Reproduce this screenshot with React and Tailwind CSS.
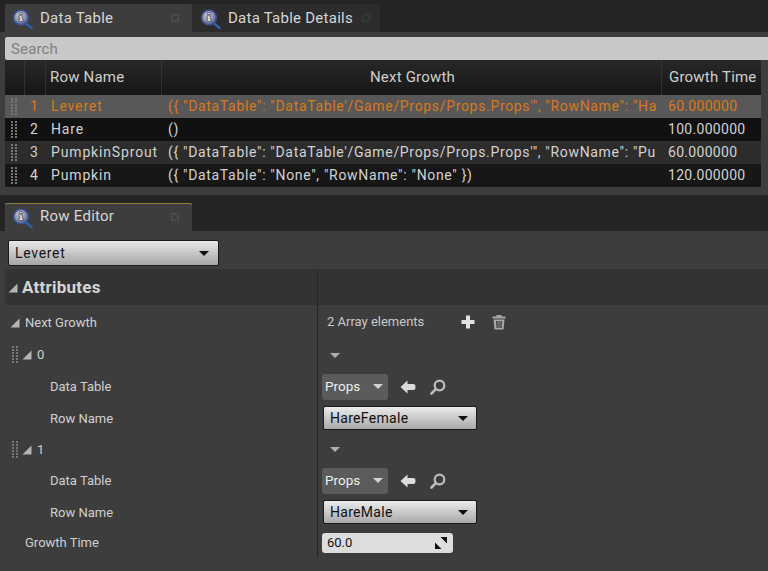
const font = { fontFamily: "Roboto, sans-serif" };

const InfoIcon = () => (
  <svg width="22" height="22" viewBox="0 0 22 22" className="mt-[3px] shrink-0">
    <defs>
      <radialGradient id="lens" cx="0.4" cy="0.35" r="0.7">
        <stop offset="0" stopColor="#c2c5d2" />
        <stop offset="0.6" stopColor="#8b90aa" />
        <stop offset="1" stopColor="#45558f" />
      </radialGradient>
    </defs>
    <path d="M13.5 14 L19.5 19" stroke="#2f5fa8" strokeWidth="2.5" strokeLinecap="round" />
    <circle cx="9" cy="8.5" r="7.3" fill="url(#lens)" stroke="#3c5398" strokeWidth="1.6" />
    <path
      d="M7.6 3.6h2.6v2H7.6z M6.8 6.8h3.4v3.8h1.1v1.7H6.8v-1.7h1v-2.1h-1z"
      fill="#f0f0f0"
      stroke="#2a2c38"
      strokeWidth="0.6"
    />
  </svg>
);

const CloseDot = ({ light }) => (
  <svg width="10" height="10" viewBox="0 0 10 10" className="shrink-0">
    <rect x="1" y="1" width="8" height="8" rx="1" fill={light ? "#4a4a4a" : "#363636"} />
    <path d="M3 3l4 4M7 3l-4 4" stroke={light ? "#353535" : "#2a2a2a"} strokeWidth="1.2" />
  </svg>
);

const Grip = ({ className = "" }) => (
  <svg width="6" height="18" viewBox="0 0 6 18" className={className}>
    {[0, 3, 6, 9, 12, 15].map((y) => (
      <g key={y} fill="#77777a">
        <rect x="0" y={y} width="2" height="2" />
        <rect x="4" y={y} width="2" height="2" />
      </g>
    ))}
  </svg>
);

const Corner = () => (
  <svg width="10" height="10" viewBox="0 0 10 10" className="shrink-0">
    <path d="M9.5 0.5V9.5H0.5Z" fill="#b4b4b4" />
  </svg>
);

const Caret = ({ color = "#111", w = 10, h = 5 }) => (
  <svg width={w} height={h} viewBox="0 0 10 5" className="shrink-0">
    <path d="M0 0H10L5 5Z" fill={color} />
  </svg>
);

const rows = [
  ["1", "Leveret", `({ "DataTable": "DataTable'/Game/Props/Props.Props'", "RowName": "Ha`, "60.000000"],
  ["2", "Hare", "()", "100.000000"],
  ["3", "PumpkinSprout", `({ "DataTable": "DataTable'/Game/Props/Props.Props'", "RowName": "Pu`, "60.000000"],
  ["4", "Pumpkin", `({ "DataTable": "None", "RowName": "None" })`, "120.000000"],
];

const rowBg = ["bg-[#585858]", "bg-[#111112]", "bg-[#2c2c2c]", "bg-[#171718]"];

const Tab = ({ label, width, active, dot, gold, pad }) => (
  <div
    className={`flex h-[28px] items-center ${pad} ${width} ${active ? "bg-[#3d3d3d]" : "bg-[#2c2c2c]"} ${gold ? "shadow-[inset_0_1px_0_#8a8238]" : ""} rounded-t-[2px]`}
  >
    <InfoIcon />
    <span className={`ml-[6px] flex-1 whitespace-nowrap text-[15px] tracking-[0.25px] text-[#d6d6d6] ${gold ? "pb-[2px]" : ""}`}>
      {label}
    </span>
    <div className={dot}>
      <CloseDot light={active} />
    </div>
  </div>
);

const AssetRow = () => (
  <div className="-ml-[1px] flex items-center">
    <div className="flex h-[26px] w-[66px] items-center justify-between rounded-[3px] bg-[#5b5b5b] pl-[3px] pr-[5px] text-[13.5px] text-[#eeeeee]">
      Props
      <Caret color="#d2d2d2" />
    </div>
    <svg width="16" height="14" viewBox="0 0 16 14" className="ml-[12px]">
      <path d="M0.5 7L7.5 0.5V4H13.5Q15.5 4 15.5 7T13.5 10H7.5V13.5Z" fill="#dcdcdc" />
    </svg>
    <svg width="16" height="16" viewBox="0 0 16 16" className="ml-[14px]">
      <circle cx="9.5" cy="6.5" r="4.8" fill="none" stroke="#bdbdbd" strokeWidth="2.2" />
      <path d="M5.8 10.2L1.5 14.5" stroke="#bdbdbd" strokeWidth="2.6" strokeLinecap="round" />
    </svg>
  </div>
);

const Combo = ({ label }) => (
  <div className="flex h-[24px] w-[154px] items-center justify-between rounded-[2px] border border-[#1a1a1a] bg-gradient-to-b from-[#ececec] to-[#a9a9a9] pl-[6px] pr-[8px] text-[14px] tracking-[0.3px] text-[#101010]">
    {label}
    <Caret />
  </div>
);

const PropRow = ({ h, label, indent, grip, tri, right }) => (
  <div className={`flex ${h}`}>
    <div className={`relative flex w-[317px] shrink-0 items-center ${indent} text-[13px] text-[#d0d0d0]`}>
      {grip && <Grip className="absolute left-[12px] top-1/2 -translate-y-1/2" />}
      {tri && (
        <span className="mr-[5px]">
          <Corner />
        </span>
      )}
      {label}
    </div>
    <div className="flex flex-1 items-center border-l border-[#242424] pl-[5px]">{right}</div>
  </div>
);

export default function App() {
  return (
    <div style={font} className="h-[571px] w-[768px] overflow-hidden bg-[#3d3d3d]">
      <div className="flex h-[32px] items-end bg-[#242424] pl-[5px]">
        <Tab label="Data Table" width="w-[187px]" pad="pl-[7px]" active dot="mr-[12px]" />
        <Tab label="Data Table Details" width="w-[188px]" pad="pl-[8px]" dot="mr-[9px]" />
      </div>

      <div className="pl-[5px] pt-[5px]">
        <div className="flex h-[23px] items-center rounded-l-[2px] bg-[#c8c8c8] pl-[6px] pt-[1px] text-[15px] tracking-[0.15px] text-[#808080]">
          Search
        </div>

        <div className="w-[756px]">
          <div className="flex h-[35px] items-center bg-gradient-to-b from-[#282828] to-[#161616] text-[15px] tracking-[0.2px] text-[#cfcfcf]">
            <div className="h-full w-[20px] border-r border-[#333333]" />
            <div className="h-full w-[21px] border-r border-[#333333]" />
            <div className="flex h-full w-[116px] items-center border-r border-[#333333] pl-[4px]">Row Name</div>
            <div className="flex h-full w-[500px] items-center justify-center border-r border-[#333333] pl-[2px]">
              Next Growth
            </div>
            <div className="flex h-full flex-1 items-center whitespace-nowrap pl-[7px]">Growth Time</div>
          </div>
          {rows.map((row, i) => (
            <div
              key={row[0]}
              className={`flex h-[23px] items-center text-[14px] ${rowBg[i]} ${i === 0 ? "text-[#d9791b]" : "text-[#d2d2d2]"}`}
            >
              <div className="flex w-[20px] justify-center pr-[2px]">
                <Grip />
              </div>
              <div className="w-[21px] pl-[5px]">{row[0]}</div>
              <div className="w-[116px] whitespace-nowrap pl-[5px] tracking-[0.85px]">{row[1]}</div>
              <div className="w-[500px] whitespace-nowrap pl-[6px] tracking-[0.67px]">{row[2]}</div>
              <div className="flex-1 whitespace-nowrap pl-[6px] tracking-[0.3px]">{row[3]}</div>
            </div>
          ))}
        </div>
      </div>

      <div className="mt-[8px] flex h-[36px] items-end bg-[#242424] pl-[5px]">
        <Tab label="Row Editor" width="w-[187px]" pad="pl-[7px]" active gold dot="mr-[12px]" />
      </div>

      <div className="px-[8px] pt-[9px]">
        <div className="flex h-[26px] w-[211px] items-center justify-between rounded-[2px] border border-[#1a1a1a] bg-gradient-to-b from-[#e8e8e8] to-[#a6a6a6] pl-[6px] pr-[9px] text-[14px] tracking-[0.7px] text-[#141414]">
          Leveret
          <Caret />
        </div>
      </div>

      <div className="ml-[5px] mt-[3px]">
        <div className="flex h-[36px] bg-[#333333]">
          <div className="flex w-[312px] shrink-0 items-center pl-[3px] pt-[1px] text-[17px] font-bold tracking-[0.25px] text-[#d4d4d4]">
            <span className="mr-[4px]">
              <Corner />
            </span>
            Attributes
          </div>
          <div className="flex-1 border-l border-[#242424]" />
        </div>
      </div>

      <div>
        <PropRow
          h="h-[34px]"
          label="Next Growth"
          indent="pl-[10px] pt-[1px]"
          tri
          right={
            <div className="flex items-center pl-[4px] text-[13px] text-[#c8c8c8]">
              <span className="w-[134px]">2 Array elements</span>
              <svg width="14" height="14" viewBox="0 0 14 14">
                <path d="M5 0.5H9V5H13.5V9H9V13.5H5V9H0.5V5H5Z" fill="#e2e2e2" />
              </svg>
              <svg width="14" height="16" viewBox="0 0 14 16" className="ml-[17px]">
                <path d="M0.5 2.5H4.5V1H9.5V2.5H13.5V4.5H0.5Z" fill="#a8a8a8" />
                <path
                  d="M1.5 5.5H12.5L11.5 15.5H2.5ZM4 7L4.5 14H5.8L5.5 7ZM6.4 7V14H7.6V7ZM8.5 7L8.2 14H9.5L10 7Z"
                  fill="#a8a8a8"
                  fillRule="evenodd"
                />
              </svg>
            </div>
          }
        />
        <PropRow h="h-[32px]" label="0" indent="pl-[22px]" grip tri right={<div className="pl-[7px]"><Caret color="#b0b0b0" /></div>} />
        <PropRow h="h-[31px]" label="Data Table" indent="pl-[50px]" right={<AssetRow />} />
        <PropRow h="h-[32px]" label="Row Name" indent="pl-[50px] pt-[1px]" right={<Combo label="HareFemale" />} />
        <PropRow h="h-[31px]" label="1" indent="pl-[22px]" grip tri right={<div className="pl-[7px]"><Caret color="#b0b0b0" /></div>} />
        <PropRow h="h-[31px]" label="Data Table" indent="pl-[50px]" right={<AssetRow />} />
        <PropRow h="h-[32px]" label="Row Name" indent="pl-[50px] pt-[1px]" right={<Combo label="HareMale" />} />
        <PropRow
          h="h-[43px] pb-[13px]"
          label="Growth Time"
          indent="pl-[25px]"
          right={
            <div className="-ml-[1px] flex h-[20px] w-[131px] items-center justify-between rounded-[3px] bg-[#dddddd] pl-[5px] pr-[6px] text-[13px] text-[#111111]">
              60.0
              <svg width="12" height="12" viewBox="0 0 12 12">
                <path d="M12 0V6.5L5.5 0ZM0 12V5.5L6.5 12Z" fill="#111" />
              </svg>
            </div>
          }
        />
      </div>
    </div>
  );
}
